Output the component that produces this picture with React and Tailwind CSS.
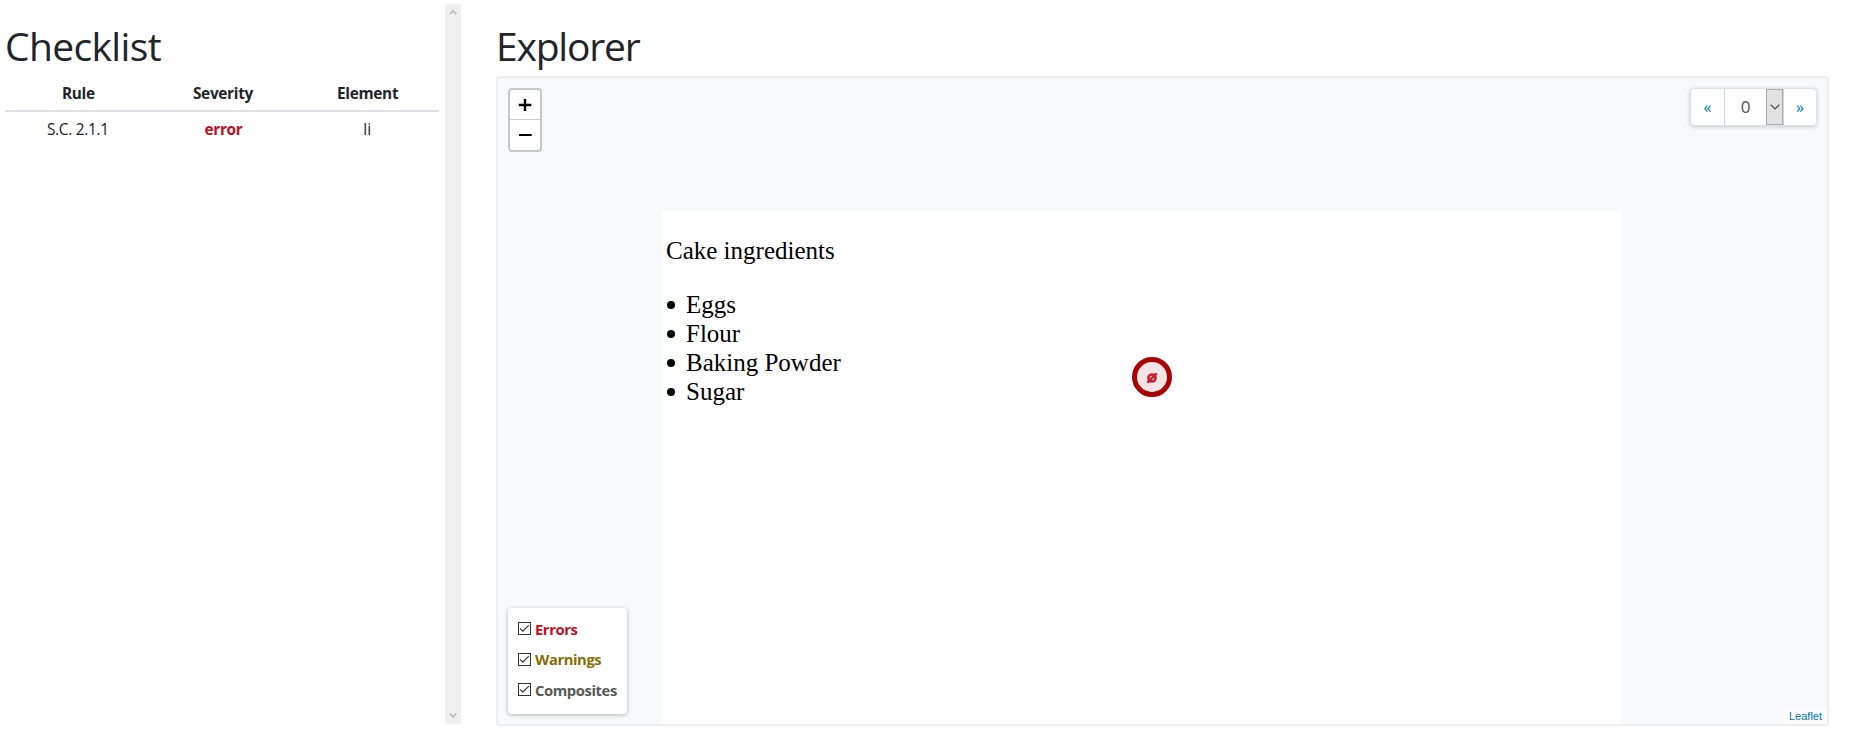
import React from "react";

function Chevron({ up }) {
  return (
    <svg width="8" height="7" viewBox="0 0 8 7" fill="none" stroke="#bfbfbf" strokeWidth="1.9">
      <path d={up ? "M0.7 5.2 4 1.8 7.3 5.2" : "M0.7 1.4 4 4.8 7.3 1.4"} />
    </svg>
  );
}

function Checklist() {
  return (
    <section className="w-[434px] pt-[18px]">
      <h1 className="h-[48px] whitespace-nowrap text-[39px] leading-[48px] tracking-[-0.65px]">Checklist</h1>
      <table className="mt-[9px] w-full table-fixed text-center text-[15.4px]">
        <thead>
          <tr className="h-[32px] border-b-2 border-[#dee2e6] font-bold leading-[22px] tracking-[-0.3px]">
            <th className="pb-[2px] pl-[2px]">Rule</th>
            <th className="pb-[2px] pl-[2px]">Severity</th>
            <th className="pb-[2px] pl-[2px]">Element</th>
          </tr>
        </thead>
        <tbody>
          <tr className="h-[36px] leading-[22px]">
            <td className="pl-[1px] pt-[1px] tracking-[-0.3px]">S.C. 2.1.1</td>
            <td className="pl-[3px] pt-[1px] font-bold tracking-[-0.3px] text-[#bd0f25]">error</td>
            <td className="pl-[1px] pt-[1px]">li</td>
          </tr>
        </tbody>
      </table>
    </section>
  );
}

function LegendRow({ label, color }) {
  return (
    <label className="flex h-[30.5px] items-center gap-[4px]">
      <svg width="13" height="13" viewBox="0 0 13 13" fill="none" className="-mt-[3px]">
        <rect x="0.5" y="0.5" width="12" height="12" fill="#fff" stroke="#333" />
        <path d="M2 6.3 4.8 9.1 10.8 3.1" stroke="#333" strokeWidth="1.2" />
      </svg>
      <span className={"-mt-[3px] text-[14.8px] font-bold tracking-[-0.42px] " + color}>{label}</span>
    </label>
  );
}

function Explorer() {
  return (
    <section className="ml-[35px] w-[1333px] pt-[18px]">
      <h1 className="h-[48px] whitespace-nowrap text-[39px] leading-[48px] tracking-[-1.2px]">Explorer</h1>
      <div className="relative mt-[6px] h-[650px] overflow-hidden rounded-[4px] border-2 border-[#eeeeee] bg-[#f8f9fa]">
        <div className="ml-[164px] mt-[133px] h-[520px] w-[960px] bg-white pl-[4px] pt-[25px] font-['Liberation_Serif',serif] text-[25px] leading-[29px] text-black">
          <p>Cake ingredients</p>
          <ul className="mt-[25px]">
            {["Eggs", "Flour", "Baking Powder", "Sugar"].map((t) => (
              <li key={t} className="flex items-center gap-[11px] pl-[1px]">
                <span className="mt-[1px] h-[8px] w-[8px] rounded-full bg-black" />
                {t}
              </li>
            ))}
          </ul>
        </div>

        <svg className="absolute left-[634px] top-[279px]" width="40" height="40" viewBox="0 0 40 40">
          <circle cx="20" cy="20" r="17.5" fill="#f6e5e6" stroke="#a90303" strokeWidth="5" />
          <circle cx="20" cy="21" r="3.6" fill="none" stroke="#cc1c30" strokeWidth="2.5" />
          <path d="M15.3 25.7 24.7 16.3" stroke="#cc1c30" strokeWidth="2.4" />
        </svg>

        <div className="absolute left-[10px] top-[10px] flex w-[34px] flex-col rounded-[4px] border-2 border-[#c6c7c8] bg-white text-black">
          <button className="flex h-[30px] items-center justify-center border-b border-[#cccccc] pt-[1px]">
            <svg width="14" height="14" viewBox="0 0 14 14" stroke="#000" strokeWidth="2.4"><path d="M0.7 7H13.3M7 1V13" /></svg>
          </button>
          <button className="flex h-[30px] items-center justify-center">
            <svg width="14" height="14" viewBox="0 0 14 14" stroke="#000" strokeWidth="2.2"><path d="M1 7H13.7" /></svg>
          </button>
        </div>

        <div className="absolute right-[10px] top-[10px] flex h-[38px] w-[127px] rounded-[4px] border border-[#dee2e6] bg-white shadow-[0_1px_4px_rgba(0,0,0,0.2)]">
          <button className="w-[33px] pb-[1px] text-[16px] text-[#0078a8]">«</button>
          <div className="flex w-[60px] border-x border-[#ced4da]">
            <span className="flex flex-1 items-center justify-center text-[17px] text-[#495057]">0</span>
            <span className="flex h-[36px] w-[17px] items-center justify-center border border-[#acacac] bg-[#e1e1e1]">
              <svg width="10" height="6" viewBox="0 0 10 6" fill="none" stroke="#444" strokeWidth="1.2"><path d="M0.7 0.7 5 5 9.3 0.7" /></svg>
            </span>
          </div>
          <button className="flex-1 pb-[1px] text-[16px] text-[#0078a8]">»</button>
        </div>

        <div className="absolute bottom-[10px] left-[10px] h-[106px] w-[119px] rounded-[4px] bg-white pl-[10px] pt-[7px] shadow-[0_1px_4px_rgba(0,0,0,0.3)]">
          <LegendRow label="Errors" color="text-[#bd0f25]" />
          <LegendRow label="Warnings" color="text-[#8a6d00]" />
          <LegendRow label="Composites" color="text-[#555a55]" />
        </div>

        <a className="absolute bottom-0 right-0 h-[16px] w-[43px] bg-white/70 pl-[5px] font-['Liberation_Sans',sans-serif] text-[11px] leading-[16px] text-[#0078a8]">Leaflet</a>
      </div>
    </section>
  );
}

export default function App() {
  return (
    <main className="flex h-[750px] w-[1855px] overflow-hidden bg-white pl-[5px] pt-[4px] font-['Open_Sans',sans-serif] text-[#212529]">
      <Checklist />
      <div className="ml-[6px] flex h-[720px] w-[16px] flex-col items-center justify-between bg-[#f0f0f0] py-[5px]">
        <Chevron up />
        <Chevron />
      </div>
      <Explorer />
    </main>
  );
}
